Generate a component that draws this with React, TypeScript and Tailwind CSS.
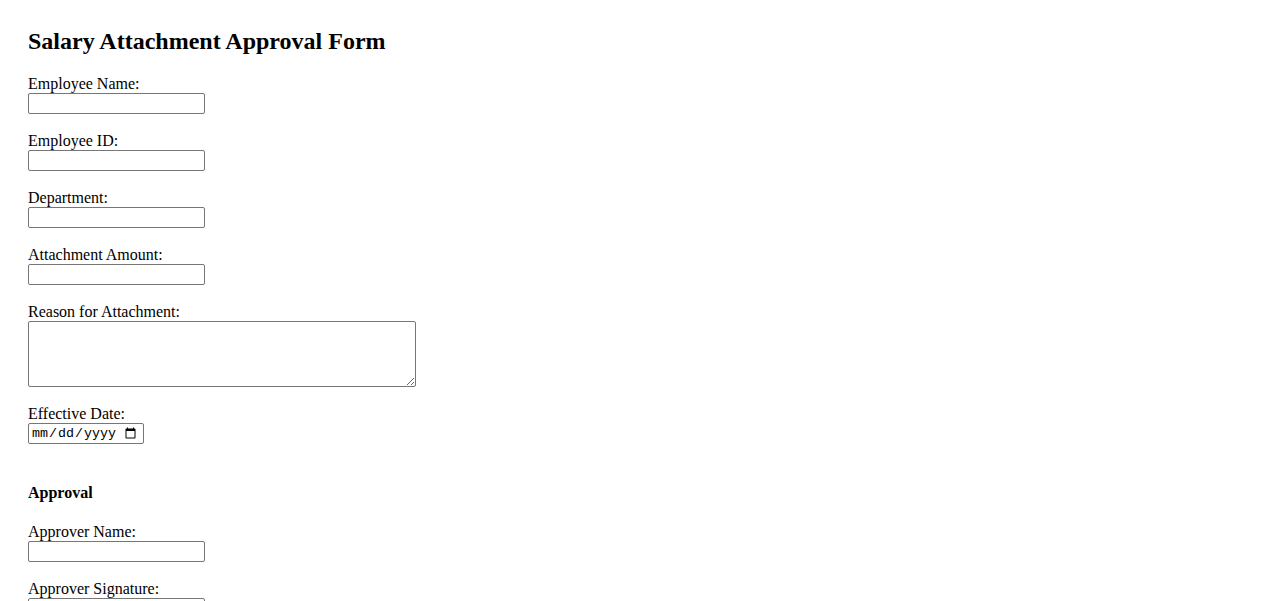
const serif = "font-['Liberation_Serif','Times_New_Roman',serif]";

interface FieldProps {
  label: string;
  children: React.ReactNode;
}

function Field({ label, children }: FieldProps) {
  return (
    <div className="flex flex-col items-start mb-[18px]">
      <label className="block h-[18px] leading-[18px] text-[16px]">{label}</label>
      {children}
    </div>
  );
}

const inputCls =
  "block w-[177px] h-[21px] px-[2px] bg-white border border-[#767676] rounded-[2px] text-[13.33px] font-['Liberation_Sans',Arial,sans-serif] outline-none";

export default function App() {
  return (
    <div className={`${serif} text-black bg-white min-h-[601px] px-[28px] pt-[27px]`}>
      {/* Header */}
      <h2 className="text-[24px] leading-[28px] font-bold mb-[20px]">
        Salary Attachment Approval Form
      </h2>

      <form className="flex flex-col">
        <Field label="Employee Name:">
          <input type="text" className={inputCls} />
        </Field>
        <Field label="Employee ID:">
          <input type="text" className={inputCls} />
        </Field>
        <Field label="Department:">
          <input type="text" className={inputCls} />
        </Field>
        <Field label="Attachment Amount:">
          <input type="text" className={inputCls} />
        </Field>
        <Field label="Reason for Attachment:">
          <textarea className="block w-[388px] h-[66px] p-[2px] bg-white border border-[#767676] rounded-[2px] resize text-[13.33px] font-['Liberation_Mono',monospace] outline-none" />
        </Field>
        <Field label="Effective Date:">
          <input
            type="date"
            className="block w-[116px] h-[21px] pl-[2px] pr-[4px] bg-white border border-[#767676] rounded-[2px] text-[13.33px] font-['Liberation_Mono','DejaVu_Sans_Mono',monospace] outline-none"
          />
        </Field>

        {/* Approval section */}
        <h4 className="mt-[22px] mb-[21px] h-[18px] leading-[18px] text-[16px] font-bold">Approval</h4>

        <Field label="Approver Name:">
          <input type="text" className={inputCls} />
        </Field>
        <Field label="Approver Signature:">
          <input type="text" className={inputCls} />
        </Field>
      </form>
    </div>
  );
}
